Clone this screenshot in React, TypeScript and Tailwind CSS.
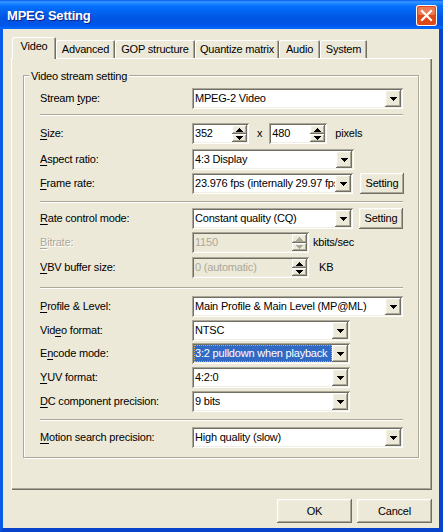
import React from "react";

const RAISED =
  "shadow-[inset_-1px_-1px_0_#716f64,inset_1px_1px_0_#ffffff,inset_-2px_-2px_0_#aca899,inset_2px_2px_0_#f1efe2]";
const SUNKEN =
  "shadow-[inset_1px_1px_0_#aca899,inset_-1px_-1px_0_#ffffff,inset_2px_2px_0_#716f64,inset_-2px_-2px_0_#f1efe2]";

function DownArrow({ color = "#000" }: { color?: string }) {
  return (
    <svg width="7" height="4" viewBox="0 0 7 4" shapeRendering="crispEdges">
      <path d="M0 0h7v1H0zM1 1h5v1H1zM2 2h3v1H2zM3 3h1v1H3z" fill={color} />
    </svg>
  );
}

function SpinUp({ color = "#000" }: { color?: string }) {
  return (
    <svg width="7" height="4" viewBox="0 0 7 4" shapeRendering="crispEdges">
      <path d="M3 0h1v1H3zM2 1h3v1H2zM1 2h5v1H1zM0 3h7v1H0z" fill={color} />
    </svg>
  );
}

function SpinDown({ color = "#000" }: { color?: string }) {
  return (
    <svg width="7" height="4" viewBox="0 0 7 4" shapeRendering="crispEdges">
      <path d="M0 0h7v1H0zM1 1h5v1H1zM2 2h3v1H2zM3 3h1v1H3z" fill={color} />
    </svg>
  );
}

function CloseIcon() {
  return (
    <svg width="21" height="21" viewBox="0 0 21 21" className="block">
      <rect x="0" y="0" width="21" height="21" rx="3" fill="#ffffff" />
      <rect x="1" y="1" width="19" height="19" rx="2" fill="#e04818" />
      <rect x="2" y="2" width="17" height="8" rx="2" fill="#ec7a52" />
      <path d="M6 6L15 15M15 6L6 15" stroke="#ffffff" strokeWidth="2.2" strokeLinecap="square" />
    </svg>
  );
}

function Combo({
  w,
  children,
  selected,
}: {
  w: string;
  children: React.ReactNode;
  selected?: boolean;
}) {
  return (
    <div className={`${w} h-[21px] flex bg-white p-[2px] ${SUNKEN}`}>
      {selected ? (
        <div className="flex-1 min-w-0 flex overflow-hidden whitespace-nowrap">
          <div className="flex-1 min-w-0 h-full bg-[#316ac5] text-white border border-dotted border-[#e0a848] flex items-center pl-0">
            {children}
          </div>
        </div>
      ) : (
        <div className="flex-1 min-w-0 flex items-center pl-[1px] overflow-hidden whitespace-nowrap">
          {children}
        </div>
      )}
      <div
        className={`w-[16px] h-full shrink-0 bg-[#ece9d8] flex items-center justify-center ${RAISED}`}
      >
        <DownArrow />
      </div>
    </div>
  );
}

function Spin({
  w,
  value,
  disabled,
  readOnly,
}: {
  w: string;
  value: string;
  disabled?: boolean;
  readOnly?: boolean;
}) {
  const grey = disabled || readOnly;
  const arrow = disabled ? "#aca899" : "#000";
  return (
    <div
      className={`${w} h-[21px] flex p-[2px] ${SUNKEN} ${grey ? "bg-[#ece9d8]" : "bg-white"}`}
    >
      <div
        className={`flex-1 min-w-0 flex items-center pl-[1px] overflow-hidden whitespace-nowrap ${grey ? "text-[#aca899]" : ""}`}
      >
        {value}
      </div>
      <div className="w-[15px] shrink-0 flex flex-col">
        <div
          className={`h-[9px] bg-[#ece9d8] flex items-center justify-center ${RAISED}`}
        >
          <SpinUp color={arrow} />
        </div>
        <div
          className={`h-[8px] bg-[#ece9d8] flex items-center justify-center ${RAISED}`}
        >
          <SpinDown color={arrow} />
        </div>
      </div>
    </div>
  );
}

function Btn({ cls, children }: { cls: string; children: React.ReactNode }) {
  return (
    <div
      className={`${cls} shrink-0 flex items-center justify-center bg-[#ece9d8] ${RAISED}`}
    >
      {children}
    </div>
  );
}

function Label({ children, disabled }: { children: React.ReactNode; disabled?: boolean }) {
  return (
    <div
      className={`w-[152px] shrink-0 whitespace-nowrap ${disabled ? "text-[#aca899] [text-shadow:1px_1px_0_#ffffff]" : ""}`}
    >
      {children}
    </div>
  );
}

function Row({ mt, children }: { mt: string; children: React.ReactNode }) {
  return <div className={`${mt} h-[21px] flex items-center`}>{children}</div>;
}

function Sep({ mt }: { mt: string }) {
  return (
    <div className={`${mt} h-[2px] w-full border-t border-t-[#aca899] border-b border-b-white`} />
  );
}

const U = ({ children }: { children: React.ReactNode }) => (
  <span className="underline underline-offset-[2px] decoration-[1px]">{children}</span>
);

const tabs: [string, string][] = [
  ["Video", "w-[44px]"],
  ["Advanced", "w-[59px]"],
  ["GOP structure", "w-[80px]"],
  ["Quantize matrix", "w-[84px]"],
  ["Audio", "w-[41px]"],
  ["System", "w-[47px]"],
];

export default function App() {
  return (
    <div className="w-[443px] h-[532px] flex flex-col font-['Liberation_Sans',Arial,sans-serif] text-[11px] tracking-[-0.2px] text-black">
      {/* Title bar */}
      <div className="h-[29px] shrink-0 flex items-start pl-[7px] pr-[6px] bg-[linear-gradient(180deg,#0058ee_0%,#3593ff_6%,#288eff_10%,#127dff_16%,#036ffc_22%,#0262ee_44%,#0057e5_60%,#0054e3_76%,#0055eb_86%,#005bf5_92%,#026afe_96%,#0062ef_100%)]">
        <span className="mt-[6px] text-white font-bold text-[13px] tracking-[-0.2px] [text-shadow:1px_1px_0_#0f1e89]">
          MPEG Setting
        </span>
        <div className="ml-auto mt-[5px] w-[21px] h-[21px] bg-[#e04818] rounded-[3px]">
          <CloseIcon />
        </div>
      </div>

      {/* Frame */}
      <div className="flex-1 flex border-l-[3px] border-r-[4px] border-b-[4px] border-l-[#0a5ae8] border-r-[#0843cc] border-b-[#0843cc] bg-[#ece9d8]">
        <div className="flex-1 flex flex-col pt-[8px]">
          {/* Tabs */}
          <div className="ml-[9px] flex items-end">
            {tabs.map(([t, w], i) =>
              i === 0 ? (
                <div
                  key={t}
                  className={`${w} relative z-10 h-[22px] -mb-[1px] pb-[3px] bg-[#ece9d8] rounded-t-[2px] flex items-center justify-center shadow-[inset_1px_1px_0_#ffffff,inset_-1px_0_0_#716f64,inset_-2px_0_0_#aca899]`}
                >
                  {t}
                </div>
              ) : (
                <div
                  key={t}
                  className={`${w} h-[18px] bg-[#ece9d8] rounded-t-[2px] flex items-center justify-center shadow-[inset_1px_1px_0_#ffffff,inset_-1px_0_0_#716f64,inset_-2px_0_0_#aca899]`}
                >
                  {t}
                </div>
              )
            )}
          </div>

          {/* Panel */}
          <div className="ml-[8px] w-[421px] h-[432px] shrink-0 bg-[#ece9d8] pl-[12px] pt-[17px] shadow-[inset_1px_1px_0_#ffffff,inset_-1px_-1px_0_#716f64,inset_-2px_-2px_0_#aca899]">
            <div className="relative w-[396px] border border-[#aca899] shadow-[inset_1px_1px_0_#ffffff,1px_1px_0_#ffffff] flex flex-col pl-[16px] pr-[15px] pb-[9px]">
              <div className="absolute -top-[8px] left-[5px] px-[2px] bg-[#ece9d8] whitespace-nowrap">
                Video stream setting
              </div>

              <Row mt="mt-[12px]">
                <Label>
                  Stream <U>t</U>ype:
                </Label>
                <Combo w="w-[211px]">MPEG-2 Video</Combo>
              </Row>
              <Sep mt="mt-[5px]" />
              <Row mt="mt-[7px]">
                <Label>
                  <U>S</U>ize:
                </Label>
                <Spin w="w-[57px]" value="352" />
                <span className="ml-[8px]">x</span>
                <div className="ml-[7px]">
                  <Spin w="w-[58px]" value="480" />
                </div>
                <span className="ml-[8px]">pixels</span>
              </Row>
              <Row mt="mt-[5px]">
                <Label>
                  <U>A</U>spect ratio:
                </Label>
                <Combo w="w-[162px]">4:3 Display</Combo>
              </Row>
              <Row mt="mt-[3px]">
                <Label>
                  <U>F</U>rame rate:
                </Label>
                <Combo w="w-[161px]">23.976 fps (internally 29.97 fps)</Combo>
                <div className="ml-[7px]">
                  <Btn cls="w-[44px] h-[21px]">Setting</Btn>
                </div>
              </Row>
              <Sep mt="mt-[7px]" />
              <Row mt="mt-[5px]">
                <Label>
                  <U>R</U>ate control mode:
                </Label>
                <Combo w="w-[162px]">Constant quality (CQ)</Combo>
                <div className="ml-[6px]">
                  <Btn cls="w-[44px] h-[21px]">Setting</Btn>
                </div>
              </Row>
              <Row mt="mt-[3px]">
                <Label disabled>
                  <U>B</U>itrate:
                </Label>
                <Spin w="w-[117px]" value="1150" disabled />
                <span className="ml-[4px]">kbits/sec</span>
              </Row>
              <Row mt="mt-[4px]">
                <Label>
                  <U>V</U>BV buffer size:
                </Label>
                <Spin w="w-[117px]" value="0 (automatic)" readOnly />
                <span className="ml-[10px]">KB</span>
              </Row>
              <Sep mt="mt-[9px]" />
              <Row mt="mt-[7px]">
                <Label>
                  <U>P</U>rofile &amp; Level:
                </Label>
                <Combo w="w-[211px]">Main Profile &amp; Main Level (MP@ML)</Combo>
              </Row>
              <Row mt="mt-[3px]">
                <Label>
                  Vid<U>e</U>o format:
                </Label>
                <Combo w="w-[158px]">NTSC</Combo>
              </Row>
              <Row mt="mt-[2px]">
                <Label>
                  E<U>n</U>code mode:
                </Label>
                <Combo w="w-[158px]" selected>
                  3:2 pulldown when playback
                </Combo>
              </Row>
              <Row mt="mt-[3px]">
                <Label>
                  <U>Y</U>UV format:
                </Label>
                <Combo w="w-[158px]">4:2:0</Combo>
              </Row>
              <Row mt="mt-[3px]">
                <Label>
                  <U>D</U>C component precision:
                </Label>
                <Combo w="w-[158px]">9 bits</Combo>
              </Row>
              <Sep mt="mt-[7px]" />
              <Row mt="mt-[6px]">
                <Label>
                  <U>M</U>otion search precision:
                </Label>
                <Combo w="w-[211px]">High quality (slow)</Combo>
              </Row>
            </div>
          </div>

          {/* Buttons */}
          <div className="mt-[9px] flex justify-end gap-[5px] pr-[7px]">
            <Btn cls="w-[75px] h-[24px]">OK</Btn>
            <Btn cls="w-[75px] h-[24px]">Cancel</Btn>
          </div>
        </div>
      </div>
    </div>
  );
}
